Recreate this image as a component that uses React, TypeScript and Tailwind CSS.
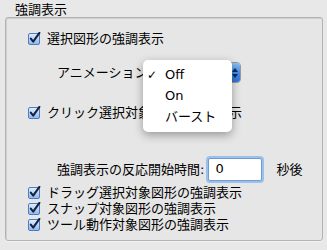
import type React from "react"

const font = { fontFamily: '"DejaVu Sans", "Noto Sans CJK JP", sans-serif' }

const CheckBox: React.FC = () => (
  <svg width="13" height="13" viewBox="0 0 13 13" className="shrink-0">
    <defs>
      <linearGradient id="cbfill" x1="0" y1="0" x2="0" y2="1">
        <stop offset="0" stopColor="#e4effc" />
        <stop offset="0.5" stopColor="#b9d3f3" />
        <stop offset="1" stopColor="#8fb6ea" />
      </linearGradient>
    </defs>
    <rect x="0.5" y="1.5" width="11" height="11" rx="1.5" fill="url(#cbfill)" stroke="#4d7cc4" />
    <path d="M2.8 6.6 L5.2 9.6 L11.4 0.8" fill="none" stroke="#15223f" strokeWidth="2" strokeLinecap="round" strokeLinejoin="round" />
  </svg>
)

const CheckRow: React.FC<{ label: string; h: string; mt: string }> = ({ label, h, mt }) => (
  <div className={`flex items-center gap-[6px] pl-[22px] ${h} ${mt}`}>
    <CheckBox />
    <span className="text-[13px] leading-none text-black whitespace-nowrap">{label}</span>
  </div>
)

const SelectButton: React.FC = () => (
  <div className="flex h-[21px] w-[86px] rounded-[4px] border border-[#9a9a9a] bg-gradient-to-b from-white to-[#ececec] overflow-hidden">
    <div className="flex-1 flex items-center pl-[10px] text-[13px]">Off</div>
    <div className="w-[10px] bg-gradient-to-b from-[#8cc0f4] via-[#4a8ee6] to-[#2f73d6] flex flex-col items-center justify-center gap-[2px]">
      <div className="w-0 h-0 border-l-[3px] border-r-[3px] border-b-[4px] border-l-transparent border-r-transparent border-b-[#0d2a5c]" />
      <div className="w-0 h-0 border-l-[3px] border-r-[3px] border-t-[4px] border-l-transparent border-r-transparent border-t-[#0d2a5c]" />
    </div>
  </div>
)

export default function App() {
  return (
    <div className="w-[327px] h-[250px] bg-[#e8e8e8] overflow-hidden text-black" style={font}>
      <div className="h-[17px] pl-[15px] pt-[3px] text-[13px] leading-[14px]">強調表示</div>

      <div className="relative ml-[5px] w-[318px] h-[224px] rounded-[3px] border border-[#b3b3b3] bg-[#e6e6e6] shadow-[inset_1px_1px_0_#cfcfcf,0_1px_0_#f4f4f4]">
        <CheckRow label="選択図形の強調表示" h="h-[17px]" mt="mt-[12px]" />

        <div className="flex items-center h-[21px] mt-[15px] pl-[51px]">
          <span className="text-[13px] leading-none whitespace-nowrap">アニメーション:</span>
          <div className="ml-[3px]">
            <SelectButton />
          </div>
        </div>

        <CheckRow label="クリック選択対象図形の強調表示" h="h-[17px]" mt="mt-[21px]" />

        <div className="flex items-center h-[24px] mt-[36px] pl-[51px]">
          <span className="text-[13px] leading-none whitespace-nowrap">強調表示の反応開始時間:</span>
          <div className="ml-[4px] w-[54px] h-[23px] bg-white border border-[#6f9bd6] rounded-[2px] shadow-[0_0_0_2px_#9cc0ec] flex items-center pl-[6px] text-[13px]">
            0
          </div>
          <span className="ml-[14px] text-[13px] leading-none">秒後</span>
        </div>

        <CheckRow label="ドラッグ選択対象図形の強調表示" h="h-[16px]" mt="mt-[3px]" />
        <CheckRow label="スナップ対象図形の強調表示" h="h-[16px]" mt="mt-0" />
        <CheckRow label="ツール動作対象図形の強調表示" h="h-[16px]" mt="mt-0" />

        <div className="absolute left-[137px] top-[42px] w-[89px] h-[72px] rounded-[5px] bg-white shadow-[0_3px_10px_rgba(0,0,0,0.35)] pt-[4px]">
          <div className="relative h-[21px] flex items-center pl-[22px] text-[13px]">
            <span className="absolute left-[4px] text-[12px]">✓</span>
            Off
          </div>
          <div className="h-[21px] flex items-center pl-[22px] text-[13px]">On</div>
          <div className="h-[21px] flex items-center pl-[22px] text-[13px]">バースト</div>
        </div>
      </div>
    </div>
  )
}
